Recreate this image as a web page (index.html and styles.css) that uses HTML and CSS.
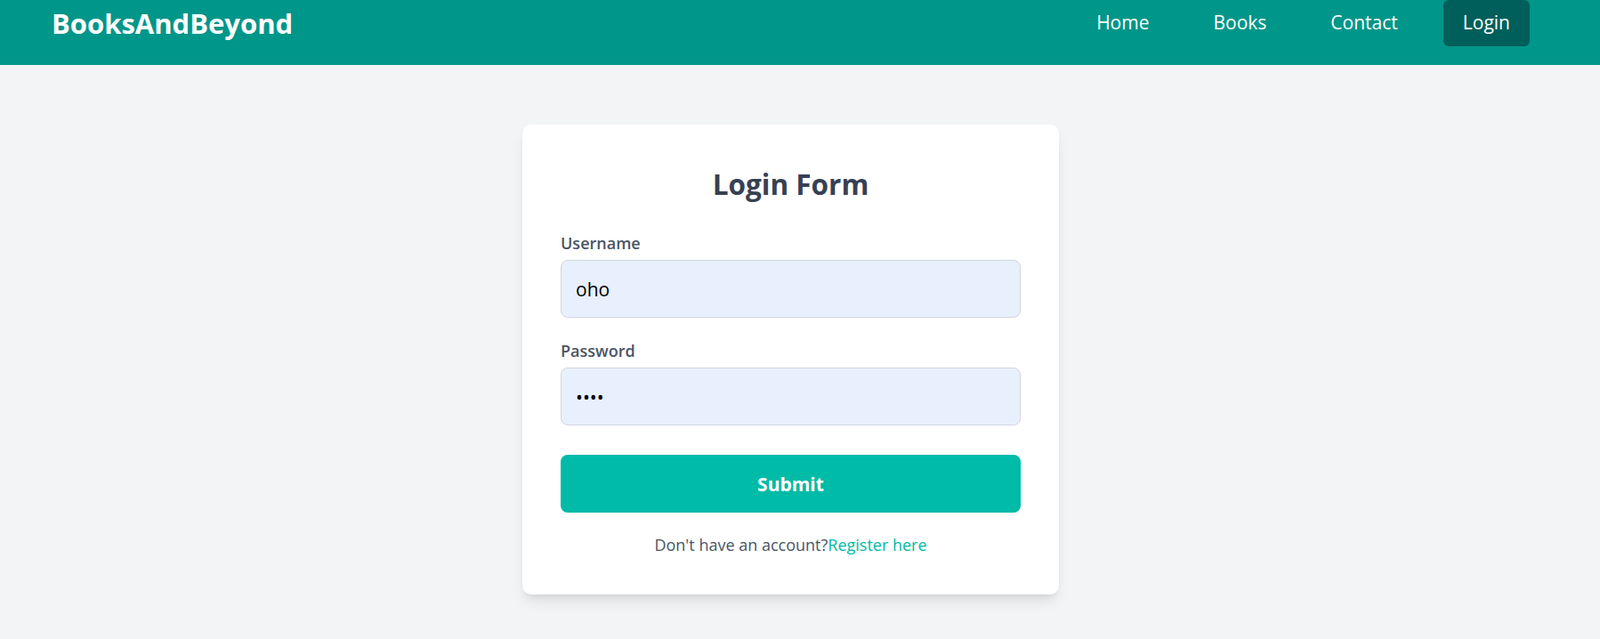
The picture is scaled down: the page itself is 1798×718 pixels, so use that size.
FILE: index.html
```html
<!DOCTYPE html>
<html lang="en">
<head>
<meta charset="utf-8">
<title>BooksAndBeyond - Login</title>
<link rel="stylesheet" href="styles.css">
</head>
<body>
<header class="topbar">
  <a class="brand" href="#">BooksAndBeyond</a>
  <nav class="nav">
    <a class="nav-link" href="#">Home</a>
    <a class="nav-link" href="#">Books</a>
    <a class="nav-link" href="#">Contact</a>
    <a class="nav-link nav-link-active" href="#">Login</a>
  </nav>
</header>
<main class="page">
  <form class="card" onsubmit="return false">
    <h2 class="card-title">Login Form</h2>
    <div class="field">
      <label class="field-label" for="username">Username</label>
      <input class="field-input" id="username" type="text" value="oho">
    </div>
    <div class="field">
      <label class="field-label" for="password">Password</label>
      <input class="field-input" id="password" type="password" value="abcd">
    </div>
    <button class="submit" type="submit">Submit</button>
    <p class="footer-text">Don't have an account?<a class="footer-link" href="#">Register here</a></p>
  </form>
</main>
</body>
</html>
```
FILE: styles.css
```css
* { box-sizing: border-box; }

html, body {
  margin: 0;
  padding: 0;
}

body {
  background: #f3f4f6;
  font-family: "Open Sans", "Noto Sans", sans-serif;
  min-height: 718px;
}

.topbar {
  height: 73px;
  background: #009689;
  display: flex;
  justify-content: space-between;
  align-items: flex-start;
  padding: 0 79px 0 58px;
}

.brand {
  margin-top: 6px;
  font-size: 31px;
  line-height: 40px;
  font-weight: 700;
  color: #ffffff;
  text-decoration: none;
}

.nav {
  display: flex;
  gap: 30px;
}

.nav-link {
  display: block;
  padding: 10px 21px 12px;
  font-size: 21px;
  line-height: 30px;
  color: #ffffff;
  text-decoration: none;
  border-radius: 6px;
}

.nav-link-active {
  padding: 10px 22px 12px;
  background: #005f5a;
}

.page {
  display: flex;
  justify-content: center;
  padding: 67px 21px 0 0;
}

.card {
  width: 603px;
  background: #ffffff;
  border-radius: 10px;
  padding: 45px 43px 43px;
  box-shadow: 0 10px 15px -3px rgba(0, 0, 0, 0.1), 0 4px 6px -4px rgba(0, 0, 0, 0.1);
}

.card-title {
  margin: 0 0 31px;
  text-align: center;
  font-size: 31.5px;
  line-height: 44px;
  font-weight: 700;
  color: #364153;
}

.field {
  margin-bottom: 24px;
}

.field-label {
  display: block;
  margin-bottom: 6px;
  font-size: 18px;
  line-height: 26px;
  font-weight: 600;
  color: #4a5565;
}

.field-input {
  display: block;
  width: 100%;
  height: 65px;
  padding: 0 16px;
  border: 1px solid #d1d5dc;
  border-radius: 8px;
  background: #e8f0fe;
  font-family: inherit;
  font-size: 21px;
  color: #000000;
  outline: none;
}

.submit {
  display: block;
  width: 100%;
  height: 65px;
  margin-top: 33px;
  border: none;
  border-radius: 8px;
  background: #00bba7;
  color: #ffffff;
  font-family: inherit;
  font-size: 21px;
  font-weight: 700;
  cursor: pointer;
}

.footer-text {
  margin: 23px 0 0;
  text-align: center;
  font-size: 18px;
  line-height: 26px;
  color: #4a5565;
}

.footer-link {
  color: #00bba7;
  text-decoration: none;
}
```
